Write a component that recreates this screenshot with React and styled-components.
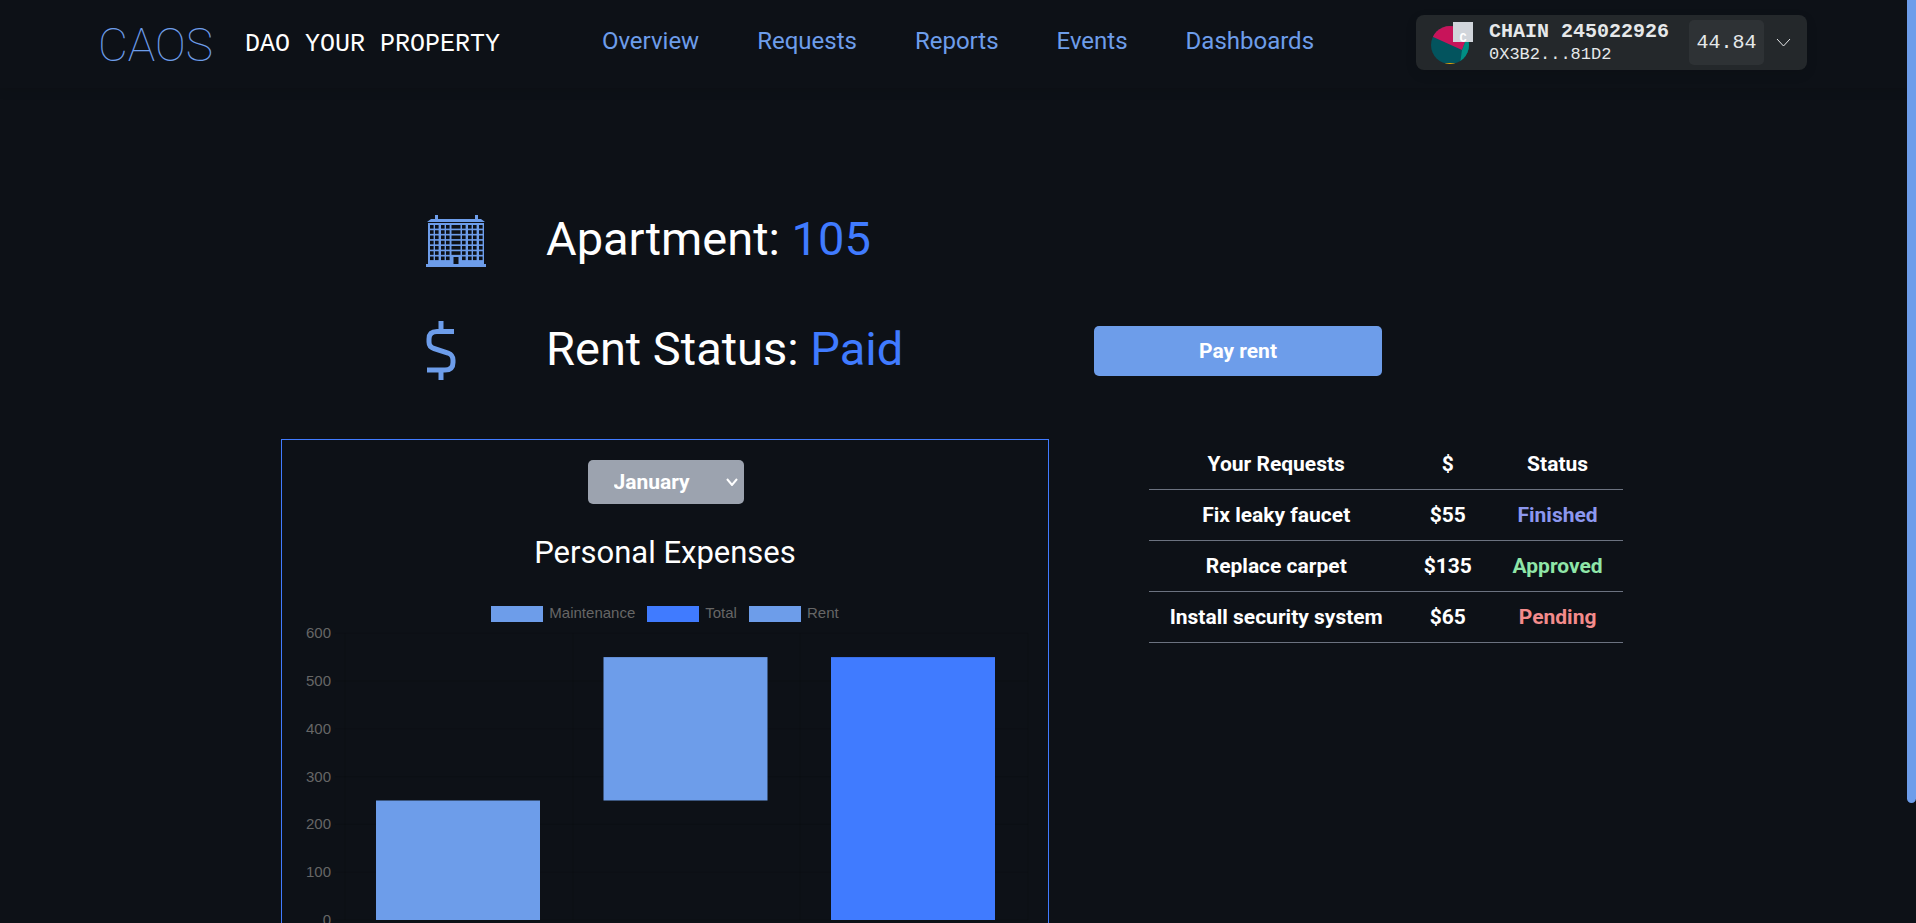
import React, { useState } from 'react';
import styled, { createGlobalStyle } from 'styled-components';

const GlobalStyle = createGlobalStyle`
  * {
    box-sizing: border-box;
  }

  body {
    margin: 0;
    background-color: #0d1117;
    color: #fff;
    font-family: Roboto, 'Liberation Sans', sans-serif;
  }
`;

const Page = styled.div`
  display: flex;
  height: 100vh;
  background-color: #0d1117;
`;

const Content = styled.div`
  flex: 1;
  min-width: 0;
  overflow-y: auto;
  scrollbar-width: none;
`;

const ScrollRail = styled.div`
  width: 9px;
`;

const ScrollThumb = styled.div`
  height: 87%;
  border-radius: 0 0 5px 5px;
  background-color: #6d9dea;
`;

const Header = styled.header`
  display: flex;
  align-items: flex-start;
  justify-content: space-between;
  height: 88px;
  padding: 15px 100px 0 98px;
  box-shadow: 0 3px 10px rgba(0, 0, 0, 0.1);
`;

const Brand = styled.div`
  display: flex;
  align-items: center;
  gap: 32px;
  height: 60px;
`;

const Logo = styled.a`
  color: #6d9dea;
  font-size: 46px;
  font-weight: 100;
  line-height: 60px;
  text-decoration: none;
`;

const Tagline = styled.span`
  font-family: 'Liberation Mono', monospace;
  font-size: 25px;
  line-height: 60px;
`;

const Nav = styled.nav`
  display: flex;
  gap: 58px;
`;

const NavLink = styled.a`
  color: #6d9dea;
  font-size: 24px;
  line-height: 52px;
  text-decoration: none;
`;

const Wallet = styled.button`
  display: flex;
  align-items: center;
  width: 391px;
  height: 55px;
  padding: 0 16px 0 15px;
  border: none;
  border-radius: 8px;
  background-color: #24282b;
  box-shadow: 0 4px 12px rgba(0, 0, 0, 0.1);
  color: #e6e8ea;
  font-family: 'Liberation Mono', monospace;
  text-align: left;
  cursor: pointer;
`;

const WalletInfo = styled.span`
  display: flex;
  flex-direction: column;
  flex: 1;
  margin-left: 16px;
`;

const ChainName = styled.span`
  font-size: 20px;
  font-weight: 700;
  line-height: 24px;
`;

const Address = styled.span`
  font-size: 17px;
  line-height: 22px;
`;

const Balance = styled.span`
  width: 75px;
  margin-right: 12px;
  border-radius: 5px;
  background-color: #2e3235;
  font-size: 20px;
  line-height: 45px;
  text-align: center;
`;

const Main = styled.main`
  padding: 123px 281px 0;
`;

const Summary = styled.section`
  display: grid;
  grid-template-columns: 60px 488px 288px;
  column-gap: 60px;
  row-gap: 50px;
  align-items: center;
  padding-left: 145px;
`;

const SummaryText = styled.h1`
  margin: 0;
  padding-bottom: 4px;
  font-size: 47px;
  font-weight: 400;
  line-height: 56px;
`;

const Accent = styled.span`
  color: #407bff;
`;

const PayButton = styled.button`
  height: 50px;
  border: none;
  border-radius: 5px;
  background-color: #6d9dea;
  color: #fff;
  font-family: inherit;
  font-size: 21px;
  font-weight: 700;
  cursor: pointer;
`;

const Details = styled.section`
  display: flex;
  align-items: flex-start;
  gap: 100px;
  margin-top: 58px;
`;

const Card = styled.div`
  display: flex;
  flex: 0 0 768px;
  flex-direction: column;
  align-items: center;
  padding: 20px 15px 60px;
  border: 1px solid #407bff;
`;

const SelectBox = styled.div`
  display: grid;
  align-items: center;
  width: 155px;
  color: #fff;

  & > * {
    grid-area: 1 / 1;
  }

  & > svg {
    justify-self: end;
    margin-right: 6px;
    pointer-events: none;
  }
`;

const MonthSelect = styled.select`
  height: 44px;
  padding: 0 26px;
  appearance: none;
  border: none;
  border-radius: 5px;
  background-color: #9ca3af;
  color: #fff;
  font-family: inherit;
  font-size: 21px;
  font-weight: 700;
`;

const CardTitle = styled.h2`
  margin: 29px 0 33px;
  font-size: 31px;
  font-weight: 400;
  line-height: 40px;
`;

const Legend = styled.ul`
  display: flex;
  gap: 12px;
  margin: 0;
  padding: 0;
  list-style: none;
`;

const LegendItem = styled.li`
  display: flex;
  align-items: flex-start;
  gap: 6px;
  color: #666;
  font-family: 'Liberation Sans', sans-serif;
  font-size: 15px;
  line-height: 14px;

  &::before {
    content: '';
    width: 52px;
    height: 16px;
    background-color: ${(props) => props.$color};
  }
`;

const ChartSvg = styled.svg`
  display: block;
  width: 100%;
  font-family: 'Liberation Sans', sans-serif;
  font-size: 15px;
`;

const RequestsTable = styled.table`
  flex: 0 0 474px;
  width: 474px;
  border-collapse: collapse;
  font-size: 21px;
  font-weight: 700;
  text-align: center;
`;

const Cell = styled.td`
  height: 51px;
  padding: 0 20px;
  border-bottom: 1px solid #6b7280;
  color: ${(props) => props.$color || '#fff'};
  white-space: nowrap;
`;

const HeadCell = styled(Cell)`
  height: 50px;
`;

const months = ['January', 'February', 'March', 'April', 'May', 'June', 'July', 'August',
  'September', 'October', 'November', 'December'];

const series = [
  { label: 'Maintenance', color: '#6d9dea', from: 0, to: 250 },
  { label: 'Total', color: '#407bff', from: 0, to: 550 },
  { label: 'Rent', color: '#6d9dea', from: 250, to: 550 },
];

const bars = [series[0], series[2], series[1]];

const requests = [
  { name: 'Fix leaky faucet', price: '$55', status: 'Finished', color: '#8c97ee' },
  { name: 'Replace carpet', price: '$135', status: 'Approved', color: '#8fe6a8' },
  { name: 'Install security system', price: '$65', status: 'Pending', color: '#f38b8b' },
];

const BuildingIcon = () => (
  <svg width="60" height="52" viewBox="0 0 60 52" fill="#6d9dea" aria-hidden="true">
    <path d="M9 0h3v4h37V0h3v4h3l4 3H1l4-3h4zM2 8h56v41h2v3H0v-3h2z" />
    <g fill="#0d1117">
      {[0, 1, 2, 3, 4, 5, 6].map((row) => (
        <React.Fragment key={row}>
          {[4, 9, 15, 20, 36, 42, 47, 53].map((x) => (
            <rect key={x} x={x} y={10 + row * 5.25} width="3.6" height="3.6" />
          ))}
          {row < 6 && <rect x="25.5" y={10 + row * 5.25} width="9" height="3.6" />}
        </React.Fragment>
      ))}
      <rect x="27.5" y="42" width="5" height="7" />
    </g>
  </svg>
);

const DollarIcon = () => (
  <svg width="30" height="60" viewBox="0 0 30 60" fill="none" stroke="#6d9dea" strokeWidth="5" aria-hidden="true">
    <path d="M28 10.500H11Q3 10.500 3 18v3q0 5 5 6.500l14 4.500q5 2 5 7v2.500q0 7.500-8 7.500H1" />
    <path d="M15 0v10M15 50v9" />
  </svg>
);

const AvatarIcon = () => (
  <svg width="42" height="42" viewBox="0 0 42 42" aria-hidden="true">
    <clipPath id="avatar">
      <circle cx="19" cy="23" r="19" />
    </clipPath>
    <g clipPath="url(#avatar)">
      <rect width="42" height="42" fill="#03545e" />
      <path d="M0 14 31 28 42 0H0z" fill="#c8145a" />
      <path d="M31 28 42 0v42H29z" fill="#018e83" />
      <path d="M10 41h18v2H10z" fill="#f2a602" />
    </g>
    <rect x="22" width="20" height="20" fill="#d1d5db" />
    <text x="32" y="20" fill="#fff" fontSize="12" fontWeight="700" textAnchor="middle">C</text>
  </svg>
);

const Chevron = ({ width, height, stroke }) => (
  <svg width={width} height={height} viewBox={`0 0 ${width} ${height}`} fill="none" stroke="currentColor" strokeWidth={stroke} aria-hidden="true">
    <path d={`M1 1 ${width / 2} ${height - 1} ${width - 1} 1`} />
  </svg>
);

const baseline = 298;
const yPos = (value) => baseline - value * 0.478;

const ExpensesChart = () => (
  <ChartSvg viewBox="0 0 736 340" role="img" aria-label="Personal expenses by category">
    {[0, 100, 200, 300, 400, 500, 600].map((tick) => (
      <g key={tick}>
        <path d={`M38 ${yPos(tick)}H731`} stroke="rgba(0, 0, 0, 0.1)" />
        <text x="34" y={yPos(tick) + 5} fill="#666" textAnchor="end">{tick}</text>
      </g>
    ))}
    {[48, 276, 503, 731].map((x) => (
      <path key={x} d={`M${x} ${yPos(600)}V${baseline}`} stroke="rgba(0, 0, 0, 0.1)" />
    ))}
    {bars.map((bar, index) => (
      <rect
        key={bar.label}
        x={79 + index * 227.500}
        y={yPos(bar.to)}
        width="164"
        height={yPos(bar.from) - yPos(bar.to)}
        fill={bar.color}
      />
    ))}
  </ChartSvg>
);

const App = () => {
  const [month, setMonth] = useState('January');

  return (
    <Page>
      <GlobalStyle />
      <Content>
        <Header>
          <Brand>
            <Logo href="#home">CAOS</Logo>
            <Tagline>DAO YOUR PROPERTY</Tagline>
          </Brand>
          <Nav>
            {['Overview', 'Requests', 'Reports', 'Events', 'Dashboards'].map((item) => (
              <NavLink key={item} href={`#${item.toLowerCase()}`}>{item}</NavLink>
            ))}
          </Nav>
          <Wallet type="button">
            <AvatarIcon />
            <WalletInfo>
              <ChainName>CHAIN 245022926</ChainName>
              <Address>0X3B2...81D2</Address>
            </WalletInfo>
            <Balance>44.84</Balance>
            <Chevron width={15} height={9} stroke={1} />
          </Wallet>
        </Header>

        <Main>
          <Summary>
            <BuildingIcon />
            <SummaryText>Apartment: <Accent>105</Accent></SummaryText>
            <span />
            <DollarIcon />
            <SummaryText>Rent Status: <Accent>Paid</Accent></SummaryText>
            <PayButton type="button">Pay rent</PayButton>
          </Summary>

          <Details>
            <Card>
              <SelectBox>
                <MonthSelect aria-label="Month" value={month} onChange={(e) => setMonth(e.target.value)}>
                  {months.map((name) => (
                    <option key={name}>{name}</option>
                  ))}
                </MonthSelect>
                <Chevron width={12} height={8} stroke={2} />
              </SelectBox>
              <CardTitle>Personal Expenses</CardTitle>
              <Legend>
                {series.map((item) => (
                  <LegendItem key={item.label} $color={item.color}>{item.label}</LegendItem>
                ))}
              </Legend>
              <ExpensesChart />
            </Card>

            <RequestsTable>
              <thead>
                <tr>
                  <HeadCell as="th" scope="col">Your Requests</HeadCell>
                  <HeadCell as="th" scope="col">$</HeadCell>
                  <HeadCell as="th" scope="col">Status</HeadCell>
                </tr>
              </thead>
              <tbody>
                {requests.map((request) => (
                  <tr key={request.name}>
                    <Cell>{request.name}</Cell>
                    <Cell>{request.price}</Cell>
                    <Cell $color={request.color}>{request.status}</Cell>
                  </tr>
                ))}
              </tbody>
            </RequestsTable>
          </Details>
        </Main>
      </Content>
      <ScrollRail>
        <ScrollThumb />
      </ScrollRail>
    </Page>
  );
};

export default App;
